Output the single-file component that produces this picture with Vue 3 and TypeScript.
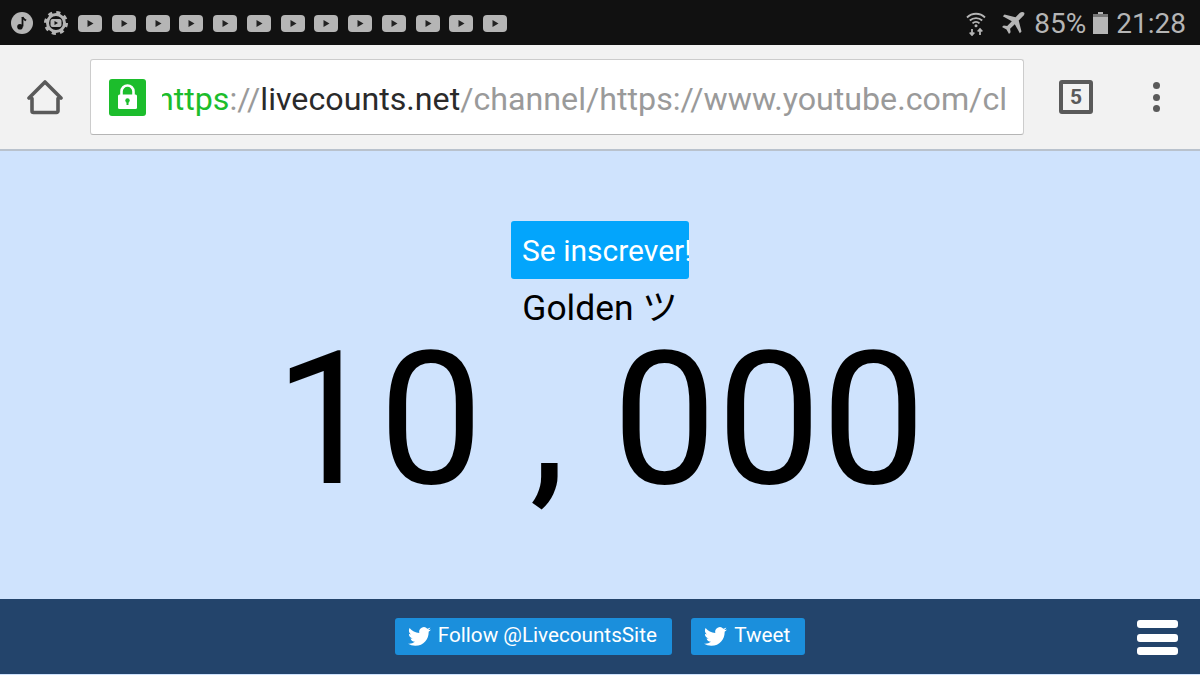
<template>
  <div class="page">
    <div class="status-bar">
      <div class="status-left">
        <svg class="music" width="24" height="24" viewBox="0 0 24 24">
          <circle cx="12" cy="12" r="11" fill="#b5b5b5" />
          <path d="M12.500 6v9.500" stroke="#111" stroke-width="1.800" fill="none" />
          <path d="M12.500 6c.5 2 2.500 2.500 3.500 3.500" stroke="#111" stroke-width="1.800" fill="none" />
          <circle cx="10" cy="15.800" r="2.800" fill="#111" />
        </svg>
        <svg class="gear" width="24" height="24" viewBox="0 0 24 24">
          <circle cx="12" cy="12" r="8.500" fill="none" stroke="#b5b5b5" stroke-width="3" />
          <circle cx="12" cy="12" r="10.500" fill="none" stroke="#b5b5b5" stroke-width="3" stroke-dasharray="4.120 4.120" />
          <rect x="6.500" y="8" width="11" height="8" rx="2" fill="#b5b5b5" />
          <path d="M10.500 10v4l3.500-2z" fill="#111" />
        </svg>
        <div class="yt-list">
          <svg v-for="n in 13" :key="n" width="24" height="17" viewBox="0 0 24 17">
            <rect width="24" height="17" rx="4" fill="#b5b5b5" />
            <path d="M9.500 5v7l6-3.500z" fill="#222" />
          </svg>
        </div>
      </div>
      <div class="status-right">
        <svg class="wifi" width="20" height="25" viewBox="0 0 20 25">
          <path d="M1 6.500c5-5 13-5 18 0M3.800 9.500c3.500-3.300 9-3.300 12.400 0M6.500 12.300c2-1.800 5-1.800 7 0" fill="none" stroke="#b5b5b5" stroke-width="1.800" />
          <circle cx="10" cy="14.800" r="1.500" fill="#b5b5b5" />
          <path d="M6 18v6M3.700 21.500 6 24l2.300-2.500M14 24v-6M11.700 20.500 14 18l2.300 2.500" fill="none" stroke="#b5b5b5" stroke-width="1.800" />
        </svg>
        <svg class="plane" width="24" height="24" viewBox="0 0 24 24">
          <path d="M23 1.500c-1-1-3-.7-4.300.6l-4.200 4.200L3.500 3.500 1.800 5.200l9 5-4.600 4.700-3.500-.5L1 16l4.500 2.500L8 23l1.600-1.700-.5-3.500 4.700-4.600 5 9 1.700-1.700-2.800-11 4.200-4.200c1.300-1.300 2.100-3.100 1.100-3.800z" fill="#b5b5b5" />
        </svg>
        <span class="pct">85%</span>
        <svg class="battery" width="15" height="22" viewBox="0 0 15 22">
          <path d="M5 0h5v2h5v20H0V2h5z" fill="#b5b5b5" />
          <rect x="0" y="2" width="15" height="3" fill="#777" />
        </svg>
        <span class="clock">21:28</span>
      </div>
    </div>

    <header class="toolbar">
      <svg class="home" width="36" height="36" viewBox="0 0 36 36">
        <path d="M5 19.500v12.500a1.500 1.500 0 0 0 1.500 1.500h23a1.500 1.500 0 0 0 1.500-1.500V19.500M2 19 18 3l16 16" fill="none" stroke="#5a5a5a" stroke-width="3.600" stroke-linejoin="round" stroke-linecap="round" />
      </svg>
      <div class="url-bar">
        <svg class="lock" width="37" height="37" viewBox="0 0 37 37">
          <rect width="37" height="37" rx="3" fill="#1cbd2c" />
          <path d="M12.500 16v-3.500a6 6 0 0 1 12 0V16" fill="none" stroke="#fff" stroke-width="2.600" />
          <rect x="9" y="15.500" width="19" height="14.500" rx="1.500" fill="#fff" />
          <circle cx="18.500" cy="21.500" r="2.200" fill="#1cbd2c" />
          <rect x="17.500" y="22" width="2" height="4" fill="#1cbd2c" />
        </svg>
        <div class="url-clip">
          <div class="url"><span class="u-green">https</span><span class="u-gray">://</span><span class="u-dark">livecounts.net</span><span class="u-gray">/channel/https://www.youtube.com/cl</span></div>
        </div>
      </div>
      <div class="tabs">5</div>
      <div class="menu-dots"><i></i><i></i><i></i></div>
    </header>

    <main class="counter">
      <button class="subscribe"><span>Se inscrever!</span></button>
      <div class="name">Golden ツ</div>
      <div class="count">10 , 000</div>
    </main>

    <footer class="footer">
      <div></div>
      <div class="share">
        <a class="tw-btn follow">
          <svg width="23" height="23" viewBox="0 0 24 24"><path :d="bird" fill="#fff" /></svg>
          <span>Follow @LivecountsSite</span>
        </a>
        <a class="tw-btn tweet">
          <svg width="23" height="23" viewBox="0 0 24 24"><path :d="bird" fill="#fff" /></svg>
          <span>Tweet</span>
        </a>
      </div>
      <div class="burger"><i></i><i></i><i></i></div>
    </footer>
  </div>
</template>

<script setup lang="ts">
const bird =
  'M23.953 4.57a10 10 0 01-2.825.775 4.958 4.958 0 002.163-2.723c-.951.555-2.005.959-3.127 1.184a4.92 4.92 0 00-8.384 4.482C7.69 8.095 4.067 6.13 1.64 3.162a4.822 4.822 0 00-.666 2.475c0 1.71.87 3.213 2.188 4.096a4.904 4.904 0 01-2.228-.616v.06a4.923 4.923 0 003.946 4.827 4.996 4.996 0 01-2.212.085 4.936 4.936 0 004.604 3.417 9.867 9.867 0 01-6.102 2.105c-.39 0-.779-.023-1.17-.067a13.995 13.995 0 007.557 2.209c9.053 0 13.998-7.496 13.998-13.985 0-.21 0-.42-.015-.63A9.935 9.935 0 0024 4.59z';
</script>

<style>
html,
body {
  margin: 0;
  background: #cfe3fd;
}
</style>

<style scoped>
.page {
  width: 1200px;
  height: 675px;
  overflow: hidden;
  display: flex;
  flex-direction: column;
  background: #cfe3fd;
  font-family: Roboto, "Noto Sans CJK JP", sans-serif;
}

.status-bar {
  height: 45px;
  box-sizing: border-box;
  padding: 1px 14px 0 10px;
  background: #111111;
  display: flex;
  align-items: center;
  justify-content: space-between;
  color: #b5b5b5;
}

.status-left {
  display: flex;
  align-items: center;
}

.gear {
  margin-left: 10px;
}

.yt-list {
  display: flex;
  gap: 9.75px;
  margin-left: 10px;
}

.status-right {
  display: flex;
  align-items: center;
}

.plane {
  margin-left: 15px;
}

.pct {
  margin-left: 9px;
  font-size: 28px;
}

.battery {
  margin-left: 7px;
}

.clock {
  margin-left: 8px;
  font-size: 28px;
}

.toolbar {
  height: 106px;
  box-sizing: border-box;
  background: #f2f2f2;
  border-bottom: 2px solid #b9c2cd;
  display: flex;
  align-items: center;
  padding-left: 27px;
}

.url-bar {
  width: 934px;
  height: 76px;
  margin-left: 27px;
  box-sizing: border-box;
  background: #ffffff;
  border: 1px solid #cccccc;
  border-bottom-color: #b5b5b5;
  border-radius: 3px;
  display: flex;
  align-items: center;
  padding: 0 17px 0 18px;
}

.url-clip {
  flex: 1;
  margin-left: 16px;
  padding-top: 3px;
  overflow: hidden;
}

.url {
  margin-left: -6px;
  font-size: 32.2px;
  line-height: 40px;
  white-space: nowrap;
}

.u-green {
  color: #1cbd2c;
}

.u-gray {
  color: #9a9a9a;
}

.u-dark {
  color: #2a2a2a;
}

.tabs {
  width: 34px;
  height: 34px;
  box-sizing: border-box;
  margin-left: 35px;
  border: 4px solid #5a5a5a;
  border-radius: 3px;
  display: flex;
  align-items: center;
  justify-content: center;
  font-size: 21px;
  font-weight: 700;
  color: #5a5a5a;
}

.menu-dots {
  margin-left: 60px;
  display: flex;
  flex-direction: column;
  gap: 4.3px;
}

.menu-dots i {
  width: 7px;
  height: 7px;
  border-radius: 50%;
  background: #5a5a5a;
}

.counter {
  flex: 1;
  display: flex;
  flex-direction: column;
  align-items: center;
  padding-top: 70px;
  color: #000000;
}

.subscribe {
  width: 178px;
  height: 58px;
  box-sizing: border-box;
  padding: 0 0 0 11px;
  border: none;
  border-radius: 3px;
  background: #03a5fc;
  color: #ffffff;
  font-family: inherit;
  font-size: 30px;
  text-align: left;
  overflow: hidden;
  white-space: nowrap;
}

.name {
  margin-top: 8px;
  font-size: 35.4px;
  line-height: 42px;
}

.count {
  font-size: 186px;
  line-height: 181px;
  white-space: nowrap;
}

.footer {
  height: 75px;
  margin-bottom: 1px;
  background: #23446b;
  display: grid;
  grid-template-columns: 1fr auto 1fr;
  align-items: center;
}

.share {
  display: flex;
  gap: 19px;
}

.tw-btn {
  height: 37px;
  box-sizing: border-box;
  background: #1b8fdc;
  border-radius: 3px;
  display: flex;
  align-items: center;
  gap: 7px;
  color: #ffffff;
  font-size: 20.7px;
  white-space: nowrap;
}

.tw-btn span {
  margin-bottom: 3px;
}

.follow {
  width: 277.5px;
  padding-left: 13px;
}

.tweet {
  width: 114px;
  padding-left: 13px;
}

.burger {
  justify-self: end;
  margin: 2px 22px 0 0;
  display: flex;
  flex-direction: column;
  gap: 5.5px;
}

.burger i {
  width: 41px;
  height: 8px;
  border-radius: 3px;
  background: #ffffff;
}
</style>
